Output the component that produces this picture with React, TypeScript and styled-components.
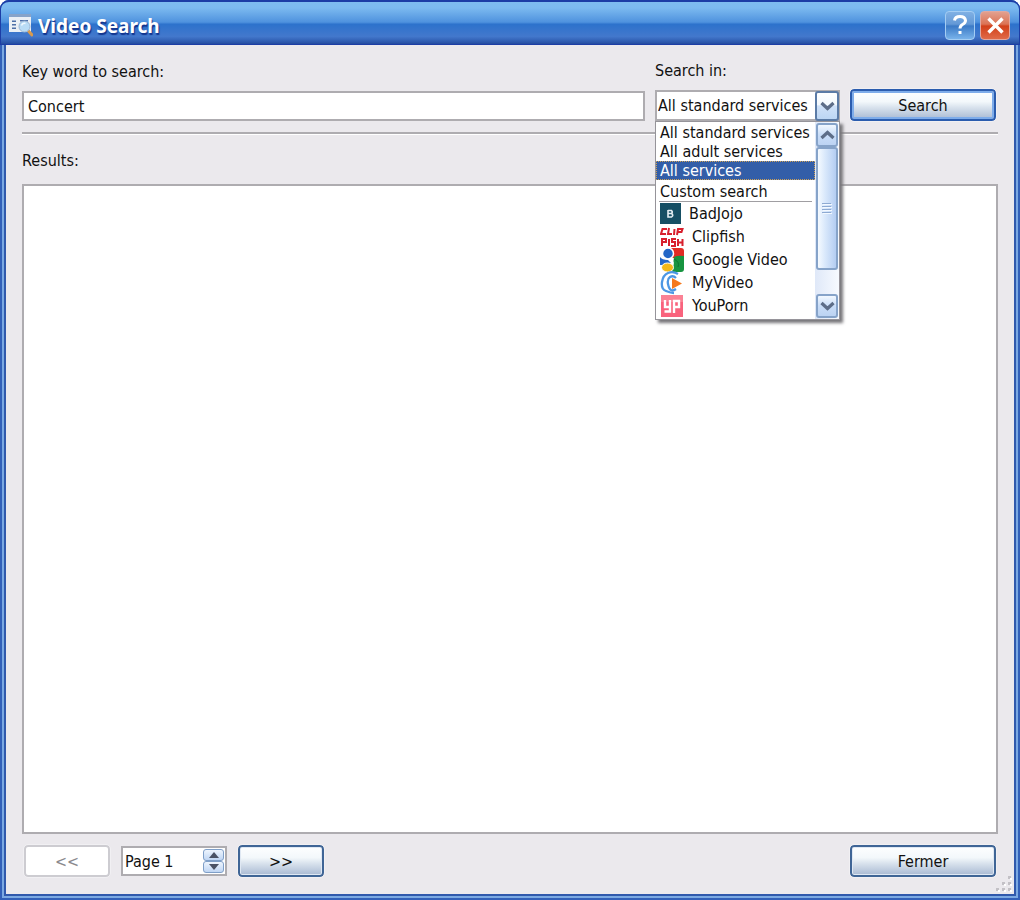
import React from "react";
import styled, { createGlobalStyle, css } from "styled-components";

const GlobalStyle = createGlobalStyle`
  *, *::before, *::after { box-sizing: border-box; }
  body { margin: 0; background: #fff; }
  body, button, input, select {
    font-family: "DejaVu Sans Condensed", "Noto Sans", sans-serif;
    font-size: 16px;
    color: #111;
  }
`;

const Window = styled.div`
  display: flex;
  flex-direction: column;
  min-height: 100vh;
  padding: 0 5px 5px;
  border-radius: 9px 9px 0 0;
  background: #3059ac;
  box-shadow: inset 0 0 0 2px #3260b8, inset 0 0 0 4px #7ba9e2;
`;

const TitleBar = styled.header`
  display: flex;
  align-items: center;
  gap: 5px;
  height: 45px;
  margin: 0 -5px;
  padding: 4px 9px 0 8px;
  border-radius: 9px 9px 0 0;
  border: solid #1c3da6;
  border-width: 2px 1px 1px;
  background: linear-gradient(#7ebcf0 0, #7cbaf0 14%, #4f92de 48%, #2d72cc 53%, #4378cc 82%, #2b57ac 96%, #234a9d 100%);
`;

const Title = styled.h1`
  flex: 1;
  margin: 0;
  padding-top: 2px;
  font-family: "Noto Sans", sans-serif;
  font-size: 19px;
  line-height: 24px;
  font-weight: 700;
  color: #fff;
  text-shadow: 1px 2px 1px #12348e;
`;

const CaptionButton = styled.button<{ $close?: boolean }>`
  display: grid;
  place-items: center;
  width: 30px;
  height: 29px;
  padding: 0;
  border: 1px solid ${p => (p.$close ? "#e0a8a0" : "#a4cdf3")};
  border-radius: 4px;
  background: ${p => (p.$close
    ? "linear-gradient(#e2a08e, #dc7355 45%, #d2401a 52%, #e06a48)"
    : "linear-gradient(#7fb0e4, #6499d6 45%, #3b7ac6 52%, #78b2ea)")};
`;

const Content = styled.main`
  flex: 1;
  display: flex;
  flex-direction: column;
  padding: 16px 16px 17px;
  background: #ebe9ed;
  border: solid #3059ac;
  border-width: 0 1px 1px;
  position: relative;
`;

const SearchForm = styled.form`
  display: flex;
  align-items: flex-end;
  gap: 10px;
  padding-bottom: 11px;
  border-bottom: 2px solid #aeacb0;
  box-shadow: 0 1px #fff;
`;

const Field = styled.div<{ $grow?: boolean }>`
  display: flex;
  flex-direction: column;
  gap: 9px;
  ${p => (p.$grow ? "flex: 1; min-width: 0;" : "flex: 0 0 185px;")}
`;

const label = css`
  display: block;
  font-size: 16px;
  line-height: 20px;
`;

const Label = styled.label`${label}`;

const TextInput = styled.input`
  width: 100%;
  height: 30px;
  padding: 1px 4px 0;
  border: 2px solid #aeacb0;
  background: #fff;
  outline: none;
`;

const Combo = styled.div`
  position: relative;
`;

const ComboSelect = styled.select`
  display: block;
  appearance: none;
  width: 100%;
  height: 31px;
  padding: 0 26px 0 1px;
  border: 2px solid #aeacb0;
  border-radius: 0;
  background: #fff;
  outline: none;
`;

const ComboArrow = styled.span`
  position: absolute;
  top: 1px;
  right: 1px;
  display: grid;
  place-items: center;
  width: 24px;
  height: 30px;
  border: 2px solid #5b7ba6;
  border-radius: 3px;
  background: linear-gradient(#fff, #f3f9fe 45%, #cfe1f8 50%, #bcd6f4);
  pointer-events: none;
`;

const Popup = styled.div`
  position: absolute;
  z-index: 2;
  top: 31px;
  left: 0;
  display: flex;
  width: 100%;
  height: 199px;
  border: 1px solid #96949a;
  background: #fff;
  box-shadow: 3px 3px 3px #77767a;
`;

const OptionList = styled.ul`
  flex: 1;
  min-width: 0;
  margin: 0;
  padding: 1px 0 0;
  list-style: none;
`;

const Option = styled.li<{ $selected?: boolean }>`
  height: 19px;
  padding-left: 4px;
  line-height: 20px;
  white-space: nowrap;
  color: ${p => (p.$selected ? "#fff" : "#111")};
  background: ${p => (p.$selected ? "#335ea8" : "none")};
  outline: ${p => (p.$selected ? "1px dotted #cda157" : "none")};
  outline-offset: -1px;

  &:nth-child(4) { line-height: 24px; }
`;

const OptionDivider = styled.li`
  height: 1px;
  margin: 2px 3px 0;
  background: #a09ea2;
`;

const ServiceOption = styled.li`
  display: flex;
  align-items: center;
  gap: 8px;
  height: 23px;
  padding-left: 4px;
  line-height: 24px;
  white-space: nowrap;

  svg { display: block; flex: none; }
`;

const ScrollBar = styled.div`
  display: flex;
  flex-direction: column;
  width: 24px;
  padding: 1px;
  background: linear-gradient(90deg, #dfe8f8, #f7faff);
`;

const scrollSkin = css`
  border: 2px solid #86a3c9;
  border-radius: 3px;
`;

const ScrollButton = styled.button`
  ${scrollSkin}
  display: grid;
  place-items: center;
  height: 24px;
  padding: 0;
  background: linear-gradient(#f2f8ff, #c9ddf8 50%, #bcd3f3);
`;

const ScrollThumb = styled.div`
  ${scrollSkin}
  display: grid;
  place-items: center;
  height: 123px;
  background: linear-gradient(90deg, #f5faff, #d9e8fb 40%, #b4cdf2);
`;

const ScrollTrack = styled.div`
  flex: 1;
`;

const PushButton = styled.button<{ $wide?: boolean; $focus?: boolean }>`
  width: ${p => (p.$wide ? 146 : 86)}px;
  height: 32px;
  margin-right: ${p => (p.$wide ? 2 : 0)}px;
  padding: 1px 0 0;
  border: 2px solid ${p => (p.$focus ? "#2b5cae" : "#3f6596")};
  border-radius: 4px;
  background: linear-gradient(#fdfeff, #f3f8fb 38%, #d7e1ec 60%, #a9bad3);
  box-shadow: inset 0 0 0 ${p => (p.$focus ? "2px #7eacea" : "1px #dfe8f3")};
  outline: 1px solid #f1f0f3;
  outline-offset: 0;

  &:disabled {
    border: 2px solid #cdccd1;
    background: #fff;
    box-shadow: none;
    color: #8a898d;
  }
`;

const ResultsLabel = styled.h2`
  ${label}
  margin: 17px 0 13px;
  font-weight: 400;
`;

const Results = styled.section`
  flex: 1;
  min-height: 200px;
  border: 2px solid #aeacb0;
  background: #fff;
`;

const Footer = styled.footer`
  display: flex;
  align-items: center;
  gap: 11px;
  padding: 11px 0 0 2px;
`;

const Spacer = styled.span`
  flex: 1;
`;

const Spinner = styled.div`
  display: flex;
  align-items: center;
  width: 106px;
  height: 30px;
  padding-right: 1px;
  border: 2px solid #aeacb0;
  background: #fff;
`;

const SpinnerInput = styled.input`
  flex: 1;
  min-width: 0;
  padding: 1px 0 0 2px;
  border: 0;
  background: transparent;
  outline: none;
`;

const SpinnerButtons = styled.div`
  display: flex;
  flex-direction: column;
`;

const SpinnerButton = styled.button`
  display: grid;
  place-items: center;
  width: 21px;
  height: 12px;
  padding: 0;
  border: 1px solid #7f9fc8;
  border-radius: 3px;
  background: linear-gradient(#eef5fe, #bfd5f3);
`;

const Grip = styled.svg`
  position: absolute;
  right: 1px;
  bottom: 1px;
`;

const WindowIcon = () => (
  <svg width="24" height="24" viewBox="0 0 24 24" aria-hidden="true">
    <path d="M0 1h22v18H0z" fill="#eaeff5" />
    <path d="M0 1h22v3H0z" fill="#86a3c9" />
    <path d="M3 7.500h4v1.500H3zM3 11h4v1.500H3zM3 14.500h4v1.500H3zM11 7h8v1.500h-8z" fill="#4d6fa8" />
    <path d="M19 17.500l4 4.500" stroke="#d99a4e" strokeWidth="3" strokeLinecap="round" />
    <circle cx="15.500" cy="13.500" r="5.500" fill="#b9dcf6" stroke="#9bb6d4" />
    <path d="M12.500 12.500q1-3 4-2" stroke="#f0f9ff" strokeWidth="1.500" fill="none" />
  </svg>
);

const HelpIcon = () => (
  <svg width="18" height="22" viewBox="0 0 18 22" aria-hidden="true">
    <path d="M3.500 6.500Q4 2.500 9 2.500T14.500 6.500Q14.500 9 11.500 10.500Q9 12 9 14.500" fill="none" stroke="#fff" strokeWidth="3" />
    <path d="M7.500 17h3v3h-3z" fill="#fff" />
  </svg>
);

const CloseIcon = () => (
  <svg width="19" height="19" viewBox="0 0 19 19" aria-hidden="true">
    <path d="M2.500 2.500l14 14m0-14l-14 14" stroke="#fff" strokeWidth="3.400" />
  </svg>
);

const Chevron = ({ up }: { up?: boolean }) => (
  <svg width="15" height="10" viewBox="0 0 15 10" aria-hidden="true">
    <path d={up ? "M1.500 8l6-5.500 6 5.500" : "M1.500 2l6 5.500 6-5.500"} fill="none" stroke="#5d6d88" strokeWidth="3.200" />
  </svg>
);

const Triangle = ({ up }: { up?: boolean }) => (
  <svg width="12" height="6" viewBox="0 0 12 6" aria-hidden="true">
    <path d={up ? "M1 6l5-6 5 6z" : "M1 0l5 6 5-6z"} fill="#4a5265" />
  </svg>
);

const ThumbGrip = () => (
  <svg width="10" height="11" viewBox="0 0 10 11" aria-hidden="true">
    <path d="M0 .5h9M0 3.500h9M0 6.500h9M0 9.500h9" stroke="#8eaad2" />
    <path d="M1 1.500h9M1 4.500h9M1 7.500h9M1 10.500h9" stroke="#f4f9ff" />
  </svg>
);

const BadJojoIcon = () => (
  <svg width="21" height="21" viewBox="0 0 21 21" aria-hidden="true">
    <path d="M0 0h21v21H0z" fill="#164f64" />
    <path d="M8 7.500h3.500q1.500 1.500 0 3h-3.500m3.500 0q2.500 1.500 0 3.500h-3.500V7" fill="none" stroke="#e4eef2" strokeWidth="1.600" />
  </svg>
);

const ClipfishIcon = () => (
  <svg width="24" height="20" viewBox="0 0 24 20" aria-hidden="true">
    <g fill="none" stroke="#d8202e" strokeWidth="2">
      <path d="M7 2H2.500L1 7h5M9 1L8 7h4M14.500 2L14 8M17 8l1-6h4.500l-1 3h-4" />
      <path d="M2 19v-7h4v3H2M9 12v7M16 12h-4v3h3v4h-4M18 12v7M22.500 12v7M18 15.500h5" />
    </g>
  </svg>
);

const GoogleIcon = () => (
  <svg width="24" height="24" viewBox="0 0 24 24" aria-hidden="true">
    <path d="M11 0h10q3 0 3 3v7H11z" fill="#e22b25" />
    <path d="M14 9q4-2 10-1v13q0 3-3 3h-9z" fill="#179440" />
    <path d="M0 9h8q8 4 5 10l-3 5H0z" fill="#fff" />
    <path d="M0 9q2 3 8 3l3 3-4 2H0z" fill="#2467c7" />
    <ellipse cx="8" cy="5.500" rx="5.500" ry="5.500" fill="#2467c7" stroke="#fff" strokeWidth="1.500" />
    <ellipse cx="7.500" cy="19.500" rx="6" ry="4.500" fill="#f2b719" stroke="#fff" />
    <path d="M14 11q6 3 4 8" fill="none" stroke="#0a7331" strokeWidth="1" />
  </svg>
);

const MyVideoIcon = () => (
  <svg width="24" height="24" viewBox="0 0 24 24" aria-hidden="true">
    <path d="M18 3Q13 0 8 2T2 11t4 9 8 2M16 7q-3-3-6-1t-2 7 3 6 5-1" fill="none" stroke="#4d97e4" strokeWidth="2.300" />
    <path d="M12 7l10 5.500L12 18z" fill="#f5781c" />
  </svg>
);

const YpIcon = () => (
  <svg width="22" height="22" viewBox="0 0 22 22" aria-hidden="true">
    <path d="M0 0h22v22H0z" fill="#f9637d" />
    <path d="M0 0h22v7H0z" fill="#fb8295" />
    <path d="M4 5v7h5V5m0 7v4.500H3.500M13 18V6h5v6h-5" fill="none" stroke="#fff" strokeWidth="2.400" />
  </svg>
);

const scopes = ["All standard services", "All adult services", "All services", "Custom search"];

const IconSlot = styled.span<{ $tight?: boolean }>`
  display: grid;
  place-items: center;
  width: ${p => (p.$tight ? 21 : 24)}px;
`;

const services = [
  { name: "BadJojo", Icon: BadJojoIcon },
  { name: "Clipfish", Icon: ClipfishIcon },
  { name: "Google Video", Icon: GoogleIcon },
  { name: "MyVideo", Icon: MyVideoIcon },
  { name: "YouPorn", Icon: YpIcon },
];

export default function App() {
  return (
    <>
      <GlobalStyle />
      <Window>
        <TitleBar>
          <WindowIcon />
          <Title>Video Search</Title>
          <CaptionButton type="button" aria-label="Help"><HelpIcon /></CaptionButton>
          <CaptionButton type="button" aria-label="Close" $close><CloseIcon /></CaptionButton>
        </TitleBar>
        <Content>
          <SearchForm onSubmit={e => e.preventDefault()}>
            <Field $grow>
              <Label htmlFor="keyword">Key word to search:</Label>
              <TextInput id="keyword" type="text" defaultValue="Concert" />
            </Field>
            <Field>
              <Label htmlFor="scope">Search in:</Label>
              <Combo>
                <ComboSelect id="scope" defaultValue={scopes[0]}>
                  {scopes.map(s => <option key={s}>{s}</option>)}
                </ComboSelect>
                <ComboArrow><Chevron /></ComboArrow>
                <Popup>
                  <OptionList role="listbox" aria-label="Search in">
                    {scopes.map((s, i) => (
                      <Option key={s} role="option" aria-selected={i === 2} $selected={i === 2}>{s}</Option>
                    ))}
                    <OptionDivider role="presentation" />
                    {services.map(({ name, Icon }, i) => (
                      <ServiceOption key={name} role="option" aria-selected={false}>
                        <IconSlot $tight={i === 0}><Icon /></IconSlot>
                        {name}
                      </ServiceOption>
                    ))}
                  </OptionList>
                  <ScrollBar>
                    <ScrollButton type="button" aria-label="Scroll up"><Chevron up /></ScrollButton>
                    <ScrollThumb><ThumbGrip /></ScrollThumb>
                    <ScrollTrack />
                    <ScrollButton type="button" aria-label="Scroll down"><Chevron /></ScrollButton>
                  </ScrollBar>
                </Popup>
              </Combo>
            </Field>
            <PushButton type="submit" $wide $focus>Search</PushButton>
          </SearchForm>
          <ResultsLabel>Results:</ResultsLabel>
          <Results aria-label="Results" />
          <Footer>
            <PushButton type="button" disabled>&lt;&lt;</PushButton>
            <Spinner>
              <SpinnerInput type="text" aria-label="Page" defaultValue="Page 1" />
              <SpinnerButtons>
                <SpinnerButton type="button" aria-label="Next page"><Triangle up /></SpinnerButton>
                <SpinnerButton type="button" aria-label="Previous page"><Triangle /></SpinnerButton>
              </SpinnerButtons>
            </Spinner>
            <PushButton type="button">&gt;&gt;</PushButton>
            <Spacer />
            <PushButton type="button" $wide>Fermer</PushButton>
          </Footer>
          <Grip width="17" height="17" viewBox="0 0 17 17" aria-hidden="true">
            <path d="M12 0h3v3h-3zM6 6h3v3H6zM12 6h3v3h-3zM0 12h3v3H0zM6 12h3v3H6zM12 12h3v3h-3z" fill="#c3c1c6" />
            <path d="M14 2h2v2h-2zM8 8h2v2H8zM14 8h2v2h-2zM2 14h2v2H2zM8 14h2v2H8zM14 14h2v2h-2z" fill="#fff" />
          </Grip>
        </Content>
      </Window>
    </>
  );
}
